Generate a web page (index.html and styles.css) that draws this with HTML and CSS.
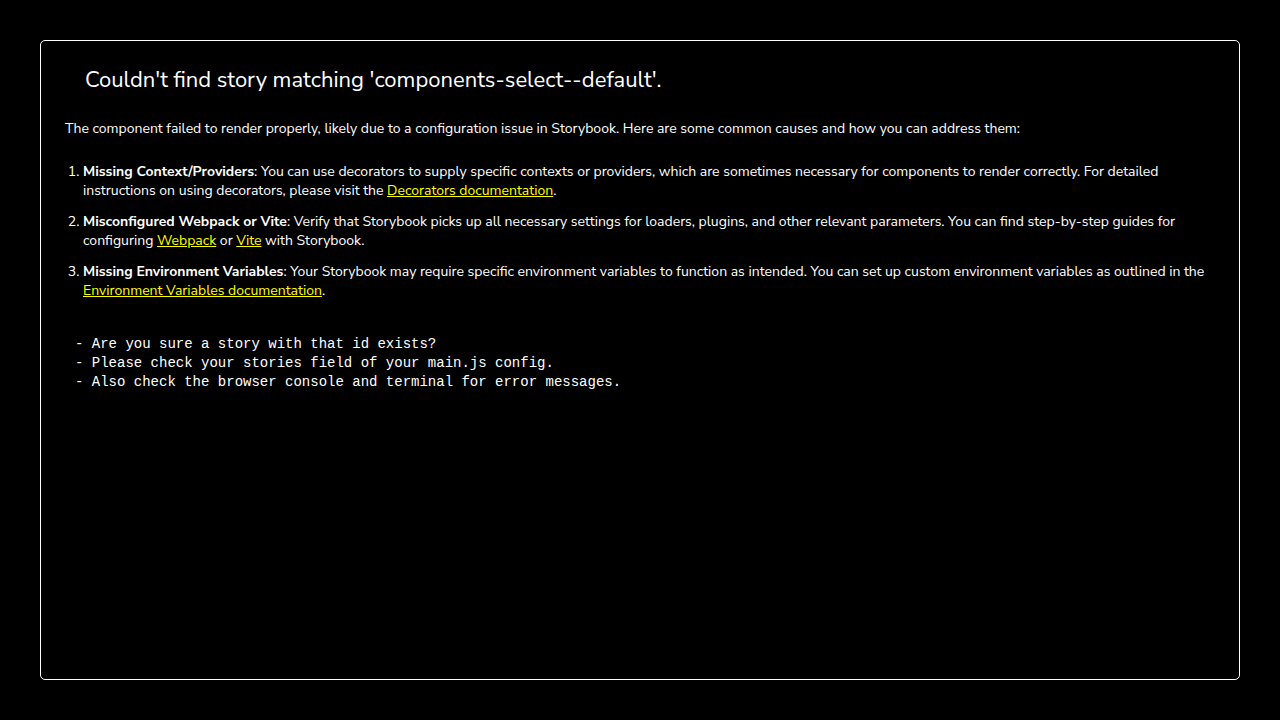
FILE: index.html
```html
<!DOCTYPE html>
<html lang="en">
<head>
<meta charset="utf-8">
<title>Storybook error</title>
<link rel="stylesheet" href="styles.css">
</head>
<body>
<div class="errordisplay">
  <h1 class="title">Couldn't find story matching 'components-select--default'.</h1>
  <p class="intro">The component failed to render properly, likely due to a configuration issue in Storybook. Here are some common causes and how you can address them:</p>
  <ol class="causes">
    <li><strong>Missing Context/Providers</strong>: You can use decorators to supply specific contexts or providers, which are sometimes necessary for components to render correctly. For detailed instructions on using decorators, please visit the <a href="#">Decorators documentation</a>.</li>
    <li><strong>Misconfigured Webpack or Vite</strong>: Verify that Storybook picks up all necessary settings for loaders, plugins, and other relevant parameters. You can find step-by-step guides for configuring <a href="#">Webpack</a> or <a href="#">Vite</a> with Storybook.</li>
    <li><strong>Missing Environment Variables</strong>: Your Storybook may require specific environment variables to function as intended. You can set up custom environment variables as outlined in the <a href="#">Environment Variables documentation</a>.</li>
  </ol>
  <pre class="details">- Are you sure a story with that id exists?
- Please check your stories field of your main.js config.
- Also check the browser console and terminal for error messages.</pre>
</div>
</body>
</html>
```
FILE: styles.css
```css
html, body {
  margin: 0;
  background: #000;
  color: #fff;
}
body {
  padding: 40px;
  font-family: "Nunito Sans", "Noto Sans", sans-serif;
}
.errordisplay {
  box-sizing: border-box;
  height: 640px;
  border: 1px solid #fff;
  border-radius: 5px;
  padding: 0 24px;
}
.title {
  font-weight: 400;
  font-size: 22px;
  line-height: 30px;
  margin: 24px 0 0 20px;
}
.intro {
  font-size: 14px;
  line-height: 19px;
  margin: 24px 0 0;
}
.causes {
  font-size: 14px;
  line-height: 19px;
  margin: 24px 0 0;
  padding-left: 18px;
}
.causes li {
  margin-bottom: 12px;
}
.causes a {
  color: #ff0;
}
.details {
  font-family: "Courier New", "Liberation Mono", monospace;
  font-size: 14px;
  line-height: 19px;
  margin: 35px 0 0;
  padding-left: 10px;
  white-space: pre;
}
```
